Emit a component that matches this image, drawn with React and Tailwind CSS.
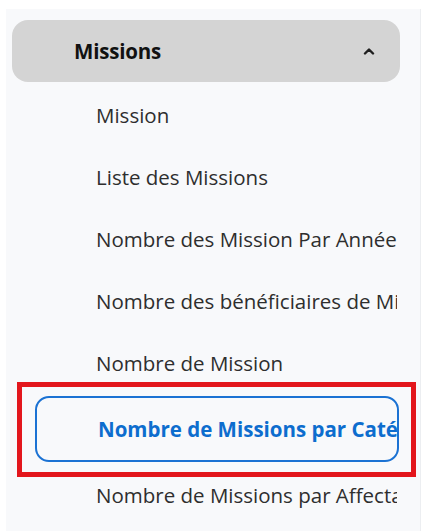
import { useState } from 'react'

const links = [
  'Mission',
  'Liste des Missions',
  'Nombre des Mission Par Année',
  'Nombre des bénéficiaires de Missions',
  'Nombre de Mission',
  'Nombre de Missions par Catégorie',
  'Nombre de Missions par Affectation',
]

function Caret() {
  return (
    <svg width="12" height="8" viewBox="0 0 12 8" fill="none" className="text-[#1f1f1f]">
      <path d="M2 6.5 L6 2.5 L10 6.5" stroke="currentColor" strokeWidth="2.4" strokeLinecap="round" strokeLinejoin="round" />
    </svg>
  )
}

export default function App() {
  const [open, setOpen] = useState(true)
  const [active] = useState('Nombre de Missions par Catégorie')

  return (
    <div className="min-h-screen bg-white pl-[6px] pt-[9px] font-['Open_Sans','Noto_Sans',sans-serif]">
      <aside className="h-[522px] w-[415px] overflow-hidden border-r border-[#eceef1] bg-[#f8f9fb] pl-[6px] pt-[11px]">
        {/* Section toggle */}
        <button
          onClick={() => setOpen(!open)}
          className="flex h-[62px] w-[388px] items-center justify-between rounded-2xl bg-[#d4d4d4] pl-[62px] pr-[25px]"
        >
          <span className="text-[20.5px] font-bold tracking-[-0.2px] text-[#111]">Missions</span>
          <Caret />
        </button>

        {open && (
          <ul className="mt-[2px] pl-[23px]">
            {links.map(label => {
              const isActive = label === active
              return (
                <li key={label} className={isActive ? 'relative my-[2px] w-[364px]' : 'w-[364px]'}>
                  <a
                    href="#"
                    className={
                      isActive
                        ? 'flex h-[66px] items-center overflow-hidden whitespace-nowrap rounded-[14px] border-2 border-[#1b72d3] pl-[61px] text-[20.5px] font-bold text-[#0d6dce]'
                        : 'flex h-[62px] items-center overflow-hidden whitespace-nowrap border-2 border-transparent pl-[59px] text-[20.5px] text-[#2e2e2e]'
                    }
                  >
                    {label}
                  </a>
                  {isActive && (
                    <span className="pointer-events-none absolute -top-[14px] -bottom-[15px] -left-[18px] -right-[17px] border-[5px] border-[#e3161c]" />
                  )}
                </li>
              )
            })}
          </ul>
        )}
      </aside>
    </div>
  )
}
